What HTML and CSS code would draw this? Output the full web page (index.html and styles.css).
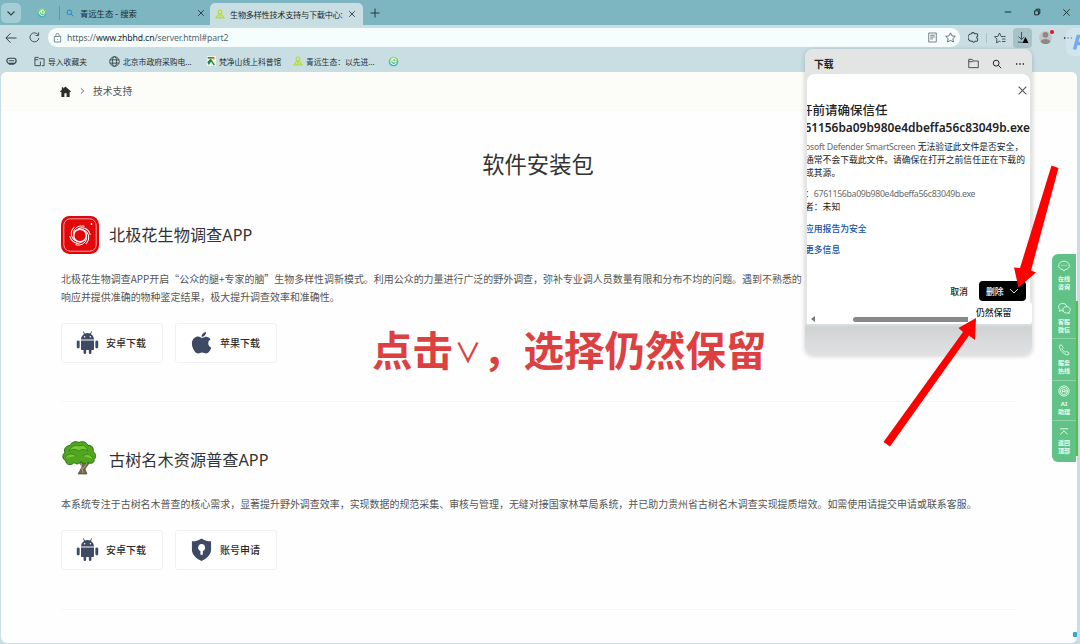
FILE: index.html
```html
<!DOCTYPE html>
<html lang="zh-CN">
<head>
  <meta charset="UTF-8" />
  <meta name="viewport" content="width=device-width, initial-scale=1.0" />
  <title>生物多样性技术支持与下载中心</title>
  <link rel="stylesheet" href="styles.css">
</head>
<body>

  <!-- Shared icons -->
  <svg class="sprite" width="0" height="0" aria-hidden="true">
    <defs>
      <linearGradient id="logo-fill" x1="0" y1="0" x2="0" y2="1">
        <stop offset="0" stop-color="#a4df45" />
        <stop offset="1" stop-color="#22a9d0" />
      </linearGradient>
    </defs>
    <symbol id="logo" viewBox="0 0 12 12">
      <circle cx="6" cy="6" r="5.3" fill="url(#logo-fill)" />
      <path d="M8.8 4A3.2 3.2 0 1 0 9 7.6M5.3 3.5v2.7h3.4V4.5" fill="none" stroke="#effff5" stroke-width="1.1" />
    </symbol>
    <symbol id="leaf" viewBox="0 0 12 12">
      <circle cx="6" cy="3.500" r="2.300" fill="none" stroke="#b9dc3c" stroke-width="1.500" />
      <path d="M5 5.500L1.200 10.500h9.600L7.500 6.500M6.500 6l-1 4" fill="none" stroke="#b9dc3c" stroke-width="1.500" />
    </symbol>
    <symbol id="close" viewBox="0 0 10 10">
      <path d="M1.500 1.500l7 7M8.500 1.500l-7 7" fill="none" stroke="currentColor" />
    </symbol>
    <symbol id="search" viewBox="0 0 12 12">
      <circle cx="5" cy="5" r="3.500" fill="none" stroke="currentColor" stroke-width="1.200" />
      <path d="M7.600 7.600L11 11" fill="none" stroke="currentColor" stroke-width="1.200" />
    </symbol>
    <symbol id="more" viewBox="0 0 12 12">
      <circle cx="2" cy="6" r="1" /><circle cx="6" cy="6" r="1" /><circle cx="10" cy="6" r="1" />
    </symbol>
    <symbol id="android" viewBox="0 0 24 24">
      <path d="M5.200 8.800C5.300 6 6.600 4 8.500 3L7.200.7l.7-.4 1.400 2.300a8 8 0 0 1 5.400 0L16.100.3l.7.4L15.500 3c1.900 1 3.200 3 3.300 5.800zM5.200 9.900h13.600v8.800c0 .7-.5 1.200-1.200 1.200h-1.500v2.700a1.300 1.300 0 0 1-2.700 0v-2.700h-2.800v2.700a1.300 1.300 0 0 1-2.700 0v-2.700H6.400c-.7 0-1.200-.5-1.200-1.200z" />
      <rect x="0.800" y="9.800" width="3" height="8.500" rx="1.500" /><rect x="20.200" y="9.800" width="3" height="8.500" rx="1.500" />
      <circle cx="9" cy="6" r=".8" fill="#fff" /><circle cx="15" cy="6" r=".8" fill="#fff" />
    </symbol>
  </svg>

  <div class="browser">
    <header class="tabs">
      <button class="tab-list" type="button" aria-label="标签"><svg viewBox="0 0 10 10" width="10" height="10"><path d="M1.500 3.500L5 7l3.500-3.500" fill="none" stroke="#2a4046" stroke-width="1.100" /></svg></button>
      <svg class="pinned" width="10" height="10"><use href="#logo" /></svg>
      <div class="tab">
        <svg class="blue" width="8" height="8"><use href="#search" /></svg>
        <span>青远生态 - 搜索</span>
        <svg class="tab-close" width="8" height="8"><use href="#close" /></svg>
      </div>
      <div class="tab active">
        <svg width="10" height="10"><use href="#leaf" /></svg>
        <span>生物多样性技术支持与下载中心:</span>
        <svg class="tab-close" width="8" height="8"><use href="#close" /></svg>
      </div>
      <svg class="new-tab" viewBox="0 0 10 10" width="10" height="10"><path d="M5 .5v9M.5 5h9" stroke="#26383d" /></svg>
      <div class="window-buttons">
        <svg viewBox="0 0 10 10" width="8" height="8"><path d="M1 5h8" stroke="#152529" stroke-width="1.200" /></svg>
        <svg viewBox="0 0 10 10" width="8" height="8"><path d="M2 3.500h5v5H2zM4 3V1.500h4.500V7H7" fill="none" stroke="#152529" stroke-width="1.200" /></svg>
        <svg width="9" height="9"><use href="#close" /></svg>
      </div>
    </header>

    <div class="toolbar">
      <svg class="back" viewBox="0 0 12 12" width="12" height="12"><path d="M11.500 6H1M5.500 1.300L.9 6l4.600 4.700" fill="none" stroke="#37474c" /></svg>
      <svg class="reload" viewBox="0 0 12 12" width="11" height="11"><path d="M10.800 6.500A4.900 4.900 0 1 1 9.700 2.700M10.500.4v3.400H7.200" fill="none" stroke="#37474c" /></svg>
      <div class="address">
        <svg viewBox="0 0 10 12" width="9" height="10"><path d="M1.200 4.200h7.600v6.600H1.200zM3 4V2.600a2 2 0 0 1 4 0V4M5 7v1.300" fill="none" stroke="#667579" /></svg>
        <span class="url">https://<b>www.zhbhd.cn</b>/server.html#part2</span>
        <svg viewBox="0 0 10 12" width="9" height="11"><path d="M.8 1h8.400v10H.8zM2.500 3.500h5M2.500 5.500h5M2.500 7.500h3" fill="none" stroke="#596669" stroke-width=".9" /></svg>
        <svg class="star" viewBox="0 0 12 12" width="11" height="11"><path d="M6 .9l1.600 3.300 3.600.5-2.600 2.500.6 3.700L6 9.200l-3.200 1.700.6-3.700L.8 4.700l3.600-.5z" fill="none" stroke="#4d5b60" stroke-width=".9" /></svg>
      </div>
      <svg class="extension" viewBox="0 0 12 12" width="11" height="11"><path d="M4 2a1.500 1.500 0 0 1 3 0h2.500a1 1 0 0 1 1 1v1.700a1.400 1.400 0 0 0 0 2.700V9a1 1 0 0 1-1 1H7.700a1.500 1.500 0 0 1-2.900 0H4a4 4 0 0 1 0-8z" fill="none" stroke="#37474c" stroke-width="1.100" /></svg>
      <i class="toolbar-line"></i>
      <svg class="favorites" viewBox="0 0 12 12" width="12" height="12"><path d="M11.500 4.500H7.200L5.500 1 4 4.300l-3.500.5L3 7.200l-.6 3.600 3.100-1.600 1 .5M8 7h3.500M8 9.500h3.500" fill="none" stroke="#37474c" stroke-width=".9" /></svg>
      <button class="download-btn" type="button" aria-label="下载"><svg viewBox="0 0 14 14" width="13" height="13"><path d="M6 1v8M2.700 6L6 9.300 9 6.300M2 12h5" fill="none" stroke="#34474d" /><path d="M10.200 6.500l3.300 6.500H6.900z" /></svg></button>
      <div class="avatar">
        <svg viewBox="0 0 14 14" width="13" height="13"><circle cx="7" cy="7" r="7" fill="#c5c5c6" /><circle cx="7" cy="4.200" r="3" fill="#8e8888" /><path d="M1.700 11.500C2.500 7.500 11.500 7.500 12.300 11.500 10 15 4 15 1.700 11.500z" fill="#8e8888" /></svg>
        <i class="dot"></i>
      </div>
      <svg class="menu" width="10" height="10"><use href="#more" /></svg>
      <div class="copilot"><svg viewBox="0 0 12 16" width="12" height="16"><path d="M2.500 15.500L6 2.500h6M5 9.500h7" fill="none" stroke="#79a9ee" stroke-width="3.500" /></svg></div>
    </div>

    <nav class="bookmarks">
      <svg class="bm-first" viewBox="0 0 12 10" width="11" height="10"><rect x="1" y="2" width="10" height="5.500" rx="2.500" fill="none" stroke="#33464d" stroke-width="1.300" /><path d="M3 4.700h6M3 8.600h6" stroke="#33464d" /></svg>
      <a class="bm bm-import"><svg viewBox="0 0 12 12" width="11" height="11"><path d="M5 10.500H1v-9h3.500L6 3h5v7.500H8.500M1 4h3.500M7 6v4.500H4.500" fill="none" stroke="#34464c" /></svg>导入收藏夹</a>
      <a class="bm bm-gov"><svg viewBox="0 0 12 12" width="11" height="11"><g fill="none" stroke="#34464c"><circle cx="6" cy="6" r="5.200" /><ellipse cx="6" cy="6" rx="2.300" ry="5.200" /><path d="M1 4.200h10M1 7.800h10" /></g></svg>北京市政府采购电...</a>
      <a class="bm bm-fan"><svg viewBox="0 0 12 12" width="10" height="10"><path d="M1 0h11v12H1z" fill="#f1f6df" /><path d="M2 2h8M3 10l3-5 4 6M6 4L2 8" stroke="#27824a" stroke-width="1.800" fill="none" /><path d="M7 2l3 2" stroke="#d29a2e" stroke-width="1.500" /></svg>梵净山线上科普馆</a>
      <a class="bm bm-qing"><svg width="10" height="10"><use href="#leaf" /></svg>青远生态：以先进...</a>
      <svg class="bm-last" width="11" height="11"><use href="#logo" /></svg>
    </nav>

    <main class="page">
      <div class="crumbs">
        <svg viewBox="0 0 12 12" width="11" height="11"><path d="M6 .5L12 6l-1 .8-.5-.5V12H7.200V8H4.800v4H1.500V6.300l-.5.5L0 6l2-1.900V1.300h1.500v1.500z" fill="#2c2c2c" /></svg>
        <svg class="crumb-arrow" viewBox="0 0 6 8" width="5" height="8"><path d="M1 .8L4.500 4 1 7.200" fill="none" stroke="#555" /></svg>
        <span>技术支持</span>
      </div>

      <h1>软件安装包</h1>

      <section class="app">
        <div class="app-head">
          <svg viewBox="0 0 38 38" width="38" height="38">
            <rect width="38" height="38" rx="8.500" fill="#d9090d" />
            <rect x="2.800" y="2.800" width="32.400" height="32.400" rx="6.500" fill="#e2080a" stroke="#f7b0b0" stroke-width=".9" />
            <g fill="none" stroke="#fff" stroke-width="1">
              <circle cx="19" cy="19.500" r="6.300" stroke-width="1.500" />
              <path id="blade" d="M12.500 19.500C11.500 13 17 8.500 23.500 10.300" />
              <use href="#blade" transform="rotate(60 19 19.500)" />
              <use href="#blade" transform="rotate(120 19 19.500)" />
              <use href="#blade" transform="rotate(180 19 19.500)" />
              <use href="#blade" transform="rotate(240 19 19.500)" />
              <use href="#blade" transform="rotate(300 19 19.500)" />
            </g>
            <circle cx="30.500" cy="8" r="1" fill="#fff" />
          </svg>
          <h2>北极花生物调查APP</h2>
        </div>
        <p>北极花生物调查APP开启“公众的腿+专家的脑”生物多样性调新模式。利用公众的力量进行广泛的野外调查，弥补专业调人员数量有限和分布不均的问题。遇到不熟悉的<br>响应并提供准确的物种鉴定结果，极大提升调查效率和准确性。</p>
        <div class="app-links">
          <a class="app-btn"><svg width="23" height="23"><use href="#android" /></svg>安卓下载</a>
          <a class="app-btn"><svg viewBox="0 0 24 24" width="23" height="23"><path d="M16.800 1c.2 2.500-2 5-4.700 5-.2-2.500 2.200-4.800 4.700-5zM21.500 8.700c-3.700 2.300-3 7.200.8 8.800-1.100 3-3.400 6-5.500 6-1.600 0-2.200-1-4.100-1s-2.600 1-4.100 1c-3 0-6.600-5.800-6.600-10.300 0-6.500 5.900-8.400 8.800-6.800 1.500.8 2.500.7 4 0 2.300-1 5.200-.2 6.700 2.300z" /></svg>苹果下载</a>
        </div>
      </section>

      <section class="app">
        <div class="app-head">
          <svg viewBox="0 0 38 38" width="38" height="38">
            <path d="M18 20l3 6-4 7h9l-2-5 5-7-3-1-3 4-2-5z" fill="#79654a" stroke="#4d5333" stroke-width=".7" />
            <path d="M18 1.500c4-2 8 0 9 3 4-1 6 3 5 6 3 2 3.500 6 1 8 1 3-3 5-6 3-2 2-6 1-7-1-2 3-5 3-7 1-3 4-9 2-8-2-4-1-4-6-1-8-2-4 2-7 5-7 1-3 5-5 9-3z" fill="#51a51f" stroke="#246d17" stroke-width="1" />
            <path d="M8 10c2-5 7-7 10-5 5-2 8 1 9 5-3-2-7-2-9 0-3-2-7-2-10 0M4 17c3-5 8-5 11-2M22 15c4-3 8-2 10 3" fill="#74c832" stroke="#347f1b" stroke-width=".8" />
            <path d="M20 22l2 10M26 22l-4 6" stroke="#b0a17d" fill="none" />
          </svg>
          <h2>古树名木资源普查APP</h2>
        </div>
        <p>本系统专注于古树名木普查的核心需求，显著提升野外调查效率，实现数据的规范采集、审核与管理，无缝对接国家林草局系统，并已助力贵州省古树名木调查实现提质增效。如需使用请提交申请或联系客服。</p>
        <div class="app-links">
          <a class="app-btn"><svg width="23" height="23"><use href="#android" /></svg>安卓下载</a>
          <a class="app-btn"><svg viewBox="0 0 24 24" width="23" height="23"><path d="M12 .5c3 2.200 6.500 3 10 3v8.500c0 5.500-4.500 9.500-10 12-5.500-2.500-10-6.500-10-12V3.500c3.500 0 7-.8 10-3z" /><path d="M10.900 13.500a3.700 3.700 0 1 1 2.500 0v4h-2.500z" fill="#fff" /></svg>账号申请</a>
        </div>
      </section>
      <i class="corner-chip"></i>
    </main>
  </div>

  <!-- Floating service bar -->
  <aside class="service">
    <div class="service-item">
      <svg viewBox="0 0 14 14" width="12" height="12"><path d="M7 1.500c-8 0-8 9.500-1.500 9.500L7 13l1.500-2c6.500 0 6.500-9.500-1.500-9.500zM3.800 6.300h1.200M6.400 6.300h1.200M9 6.300h1.200" /></svg>
      <span>在线<br>咨询</span>
    </div>
    <div class="service-item">
      <svg viewBox="0 0 14 14" width="13" height="13"><path d="M5.500 9.500c-1 0-1.500-.1-2-.4L1.500 10l.5-2C-1 5 1.500 1.500 5 1.500c2.500 0 4 1.300 4.300 3.300M9.300 5C5 5 4 9.500 7 11.300c1.300.7 2.700.7 3.600.3l1.600.8-.4-1.500C15 8.500 12.500 5 9.300 5z" /></svg>
      <span>客服<br>微信</span>
    </div>
    <div class="service-item">
      <svg viewBox="0 0 14 14" width="12" height="12"><path d="M2 1.500C-.5 4.500 8 14.500 12 12.500l1-2-3-2-1.500 1C7 8.800 5.200 7 4.700 5.500L6 4 4 1z" /></svg>
      <span>服务<br>热线</span>
    </div>
    <div class="service-item">
      <svg viewBox="0 0 14 14" width="12" height="12"><circle cx="7" cy="7" r="6" /><circle cx="7" cy="7" r="4.200" /><path d="M5 9V6l1.500-1.500L8 6v3M9.500 5v4M5 7.500h3" /></svg>
      <span>AI<br>助理</span>
    </div>
    <div class="service-item">
      <svg viewBox="0 0 14 10" width="12" height="8"><path d="M2 1h10M2.500 8L7 3.500 11.500 8" stroke-width="1.200" /></svg>
      <span>返回<br>顶部</span>
    </div>
  </aside>
  <i class="service-edge"></i>

  <!-- Downloads flyout -->
  <div class="downloads">
    <div class="dl-head">
      <strong>下载</strong>
      <svg viewBox="0 0 12 12" width="11" height="11"><path d="M.8 10.500v-9h3.700L6 3.300h5.200v7.200zM.8 4h4L6 3.300" fill="none" stroke="#444" /></svg>
      <svg width="10" height="10"><use href="#search" /></svg>
      <svg width="10" height="10"><use href="#more" /></svg>
    </div>
    <div class="dl-panel">
      <svg class="dl-close" width="11" height="11"><use href="#close" /></svg>
      <div class="dl-text">
        <h3>开前请确保信任</h3>
        <div class="dl-file">61156ba09b980e4dbeffa56c83049b.exe</div>
        <p class="dl-body"><span class="latin product">osoft Defender SmartScreen</span> 无法验证此文件是否安全，<br>通常不会下载此文件。请确保在打开之前信任正在下载的<br>或其源。</p>
        <p class="dl-meta">：<span class="latin hash">6761156ba09b980e4dbeffa56c83049b.exe</span><br>者：未知</p>
        <a class="dl-link">应用报告为安全</a>
        <a class="dl-link">更多信息</a>
      </div>
      <div class="dl-actions">
        <span>取消</span>
        <button class="delete" type="button"><span>删除</span><svg viewBox="0 0 10 10" width="10" height="10"><path d="M1 3l4 4 4-4" fill="none" stroke="#ddd" /></svg></button>
      </div>
      <div class="dl-scroll"><i class="scroll-left"></i><i class="scroll-thumb"></i></div>
    </div>
    <div class="keep">仍然保留</div>
  </div>

  <!-- Instruction overlay -->
  <div class="callout">点击<span class="vee">∨</span>，选择仍然保留</div>
  <svg class="arrows" viewBox="0 0 1080 644" width="1080" height="644">
    <path d="M1051.500 165.500l7 2.500-27.500 102.500 5 2-17.500 15-4.500-20 6 .5z" fill="#fe0000" />
    <path d="M883.500 442l6.500 4.500 79-111 6 4.500 1-22-17.500 10 4.500 4z" fill="#fe0000" />
  </svg>

</body>
</html>
```
FILE: styles.css
```css
* {
  box-sizing: border-box;
}
body {
  margin: 0;
  height: 644px;
  overflow: hidden;
  position: relative;
  font-family: "Noto Sans", "Noto Sans CJK SC", sans-serif;
  background: #c9dee3;
}
h1, h2, h3, p {
  margin: 0;
  font-weight: 400;
}
svg {
  display: block;
  flex: none;
}
button {
  border: 0;
  padding: 0;
  font: inherit;
}
.sprite {
  position: absolute;
}

/* Browser frame */
.browser {
  height: 644px;
  display: flex;
  flex-direction: column;
}
.tabs {
  height: 25px;
  flex: none;
  display: flex;
  align-items: center;
  background: #7db5c1;
  color: #17282d;
  font-size: 8.7px;
}
.tab-list {
  width: 20px;
  height: 20px;
  margin-left: 1px;
  border-radius: 5px;
  background: #a5cdd5;
  display: grid;
  place-items: center;
}
.pinned {
  margin: 0 12px 0 16px;
}
.tab {
  width: 151px;
  height: 14px;
  padding: 0 5px 0 6px;
  border-left: 1px solid #6398a5;
  display: flex;
  align-items: center;
  white-space: nowrap;
  font-size: 8.3px;
}
.tab span {
  margin-left: 6px;
}
.tab .blue {
  color: #1676bd;
}
.tab-close {
  margin-left: auto;
}
.tab.active {
  height: 22px;
  margin-top: 3px;
  border: 0;
  padding: 0 7px 1px 5px;
  border-radius: 5px 5px 0 0;
  background: #c9dee3;
  width: 153px;
}
.tab.active span {
  margin-left: 5px;
  letter-spacing: -0.500px;
  font-size: 8.200px;
  letter-spacing: -0.3px;
}
.new-tab {
  margin-left: 7px;
}
.window-buttons {
  margin-left: auto;
  margin-right: 9px;
  display: flex;
  gap: 21px;
}
.toolbar {
  height: 25px;
  flex: none;
  display: flex;
  align-items: center;
  padding-left: 5px;
}
.reload {
  margin-left: 12px;
}
.address {
  width: 912px;
  height: 19px;
  margin-left: 8px;
  padding: 0 4px 0 5px;
  border-radius: 9px;
  background: #f5fdfd;
  display: flex;
  align-items: center;
}
.url {
  margin: 0 auto 0 5px;
  font-size: 8.700px;
  color: #56656a;
  letter-spacing: -0.120px;
}
.url b {
  font-weight: 400;
  color: #17282d;
}
.star {
  margin-left: 8px;
}
.extension {
  margin-left: 8px;
}
.toolbar-line {
  width: 1px;
  height: 10px;
  margin-left: 7px;
  background: #a9c2c8;
}
.favorites {
  margin-left: 7px;
}
.download-btn {
  width: 19px;
  height: 20px;
  margin-left: 7px;
  border-radius: 4px;
  background: #a7c3c9;
  display: grid;
  place-items: center;
}
.avatar {
  position: relative;
  margin-left: 7px;
}
.dot {
  position: absolute;
  top: -1px;
  right: -2px;
  width: 4px;
  height: 4px;
  border-radius: 50%;
  background: #db1523;
}
.menu {
  margin-left: 11px;
}
.copilot {
  position: absolute;
  left: 1066px;
  top: 28px;
  width: 14px;
  height: 28px;
  padding: 6px 0 0 6px;
  overflow: hidden;
  border-radius: 7px 0 0 7px;
  background: rgba(213, 233, 244, 0.6);
}
.bookmarks {
  height: 22px;
  flex: none;
  display: flex;
  align-items: center;
  font-size: 7.800px;
  color: #1e3035;
  white-space: nowrap;
}
.bm {
  display: flex;
  align-items: center;
  gap: 3px;
}
.bm-first {
  margin: 0 17px 0 6px;
}
.bm-import {
  width: 75px;
}
.bm-gov {
  width: 97px;
}
.bm-fan {
  width: 87px;
}
.bm-qing {
  width: 95px;
}

/* Web page */
.page {
  width: 1076px;
  height: 571px;
  margin-left: 1px;
  overflow: hidden;
  position: relative;
  border-radius: 6px;
  background: #fefefe;
  color: #333;
}
.crumbs {
  height: 39px;
  padding-left: 59px;
  display: flex;
  align-items: center;
  font-size: 9.8px;
  color: #555;
  background: #fcfcf8;
  border-bottom: 1px solid #fafaf7;
}
.crumb-arrow {
  margin: 0 8px 0 9px;
}
h1 {
  height: 105px;
  padding-top: 38px;
  font-size: 22.3px;
  line-height: 32px;
  text-align: center;
  padding-right: 2px;
}
.app {
  width: 956px;
  margin-left: 60px;
  border-bottom: 1px solid #f5f5f5;
}
.app:nth-of-type(1) {
  height: 186px;
  margin-bottom: 21px;
}
.app:nth-of-type(2) {
  height: 187px;
  padding-top: 18px;
}
.app-head {
  display: flex;
  align-items: center;
  gap: 10px;
}
.app-head h2 {
  font-size: 16.2px;
  line-height: 24px;
}
.app p {
  margin: 16px 0 17px;
  font-family: "Noto Sans CJK SC", sans-serif;
  font-size: 9.960px;
  line-height: 18px;
  color: #555;
  white-space: nowrap;
}
.app-links {
  display: flex;
  gap: 12px;
}
.app-btn {
  width: 102px;
  height: 40px;
  padding: 0 0 1px 14px;
  display: flex;
  align-items: center;
  gap: 7px;
  border: 1px solid #f1f1f2;
  border-radius: 3px;
  background: #fff;
  font-size: 10px;
  font-weight: 500;
  color: #2c2c2c;
}
.app-btn svg {
  fill: #3e4a63;
}
.corner-chip {
  position: absolute;
  right: 0;
  bottom: 6px;
  width: 4px;
  height: 5px;
  border-radius: 1px;
  background: #2da9d4;
}

/* Floating service bar */
.service {
  position: absolute;
  left: 1052px;
  top: 254px;
  width: 24px;
  height: 208px;
  border-radius: 6px 0 0 6px;
  background: #60c287;
  color: #e9fff1;
  display: grid;
  grid-template-rows: 43px 41px 42px 40px 42px;
}
.service-item {
  display: flex;
  flex-direction: column;
  align-items: center;
  justify-content: center;
  gap: 3px;
  font-size: 6px;
  font-weight: 700;
  line-height: 8px;
  text-align: center;
}
.service-item + .service-item + .service-item {
  border-top: 1px solid #8cd4a8;
}
.service-item svg {
  fill: none;
  stroke: #e9fff1;
}
.service-edge {
  position: absolute;
  left: 1076px;
  top: 301px;
  width: 2px;
  height: 155px;
  background: #5cb848;
}

/* Downloads flyout */
.downloads {
  position: absolute;
  left: 805px;
  top: 49px;
  width: 227px;
  height: 306px;
  padding: 0 2px;
  border-radius: 8px;
  background: linear-gradient(#e3e5e5 0, #e3e5e5 274px, #d0d3d4 278px, #dfe1e2 306px);
  box-shadow: 0 1px 5px rgba(0, 0, 0, 0.2);
  color: #222;
}
.dl-head {
  height: 25px;
  padding: 4px 5px 0 7px;
  display: flex;
  align-items: center;
  gap: 13px;
  font-size: 9.8px;
}
.dl-head strong {
  margin-right: auto;
}
.dl-panel {
  position: relative;
  height: 250px;
  overflow: hidden;
  border-radius: 8px 8px 0 0;
  background: #fff;
}
.dl-close {
  margin: 11px 2px 0 auto;
  color: #555;
}
.dl-text {
  margin: 6px 0 0 -2px;
  font-size: 8.8px;
  line-height: 13px;
  white-space: nowrap;
}
.dl-text h3 {
  margin-left: -5px;
  font-size: 12.5px;
  font-weight: 500;
  line-height: 17px;
}
.dl-file {
  display: flex;
  justify-content: flex-end;
  font-size: 11.9px;
  font-weight: 600;
  line-height: 17px;
}
.dl-body {
  margin-top: 5px;
}
.latin {
  color: #6a6a6a;
}
.product {
  letter-spacing: -0.26px;
}
.hash {
  letter-spacing: -0.36px;
}
.dl-meta {
  margin-top: 8px;
}
.dl-link {
  display: block;
  margin-top: 8.5px;
  font-weight: 500;
  color: #174ea6;
}
.dl-actions {
  position: absolute;
  right: 4px;
  top: 207px;
  display: flex;
  align-items: center;
  gap: 11px;
  font-size: 8.9px;
  font-weight: 500;
}
.delete {
  width: 47px;
  height: 20px;
  padding: 0 7px;
  border-radius: 4px;
  background: #000;
  color: #fff;
  display: flex;
  align-items: center;
  justify-content: space-between;
}
.dl-scroll {
  position: absolute;
  left: 4px;
  bottom: 2px;
  display: flex;
  align-items: center;
  gap: 38px;
}
.scroll-left {
  border: 3px solid transparent;
  border-left: 0;
  border-right: 4px solid #777;
}
.scroll-thumb {
  width: 115px;
  height: 5px;
  border-radius: 3px 0 0 3px;
  background: #888;
}
.keep {
  position: absolute;
  right: 0;
  top: 253px;
  width: 64px;
  height: 22px;
  padding-left: 8px;
  border-radius: 3px;
  background: #fff;
  font-size: 8.9px;
  font-weight: 500;
  line-height: 21px;
}

/* Instruction overlay */
.callout {
  position: absolute;
  left: 372px;
  top: 321px;
  font-size: 40.5px;
  font-weight: 700;
  line-height: 60px;
  color: #dd4040;
  white-space: nowrap;
}
.vee {
  display: inline-block;
  width: 30px;
  font-size: 27px;
  font-weight: 500;
  text-align: center;
  transform: translateY(-3px);
}
.arrows {
  position: absolute;
  left: 0;
  top: 0;
  pointer-events: none;
}
```
